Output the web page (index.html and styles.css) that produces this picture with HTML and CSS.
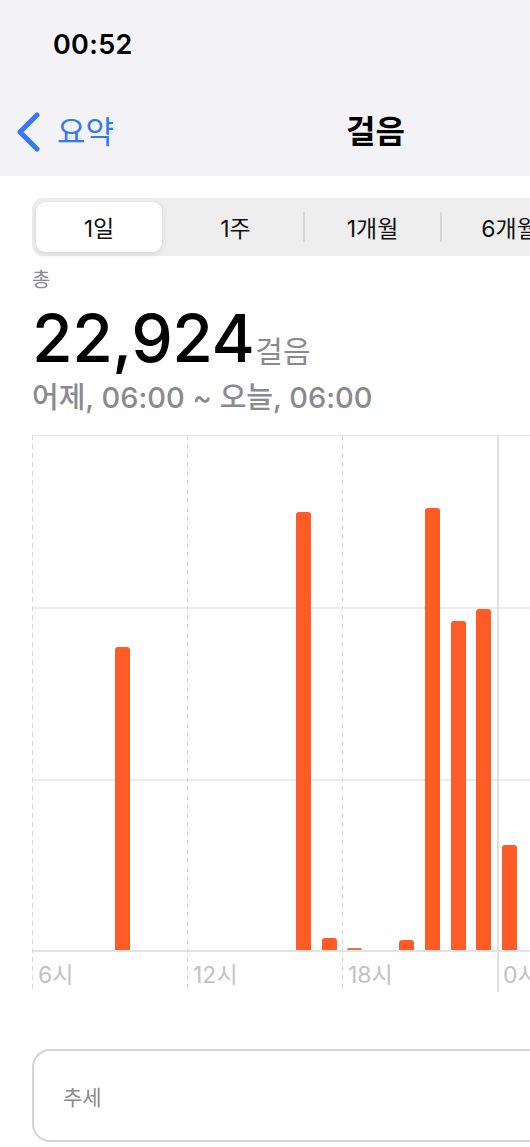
FILE: index.html
```html
<!DOCTYPE html>
<html lang="ko">
<head>
<meta charset="utf-8">
<link rel="stylesheet" href="styles.css">
</head>
<body>
<div class="page">
  <header class="top">
    <div class="status"><span class="time">00:52</span></div>
    <nav class="navbar">
      <a class="back">
        <svg class="chev" width="26" height="40" viewBox="0 0 26 40"><path d="M21 3 L4 20 L21 37" fill="none" stroke="#3478f6" stroke-width="5" stroke-linecap="round" stroke-linejoin="round"/></svg>
        <span class="back-label">요약</span>
      </a>
      <h1 class="title">걸음</h1>
    </nav>
  </header>

  <main class="content">
    <div class="segmented">
      <div class="seg selected">1일</div>
      <div class="seg">1주</div>
      <div class="sep"></div>
      <div class="seg">1개월</div>
      <div class="sep"></div>
      <div class="seg">6개월</div>
      <div class="sep"></div>
      <div class="seg">1년</div>
    </div>

    <div class="label-total">총</div>
    <div class="total"><span class="num">22,924</span><span class="unit">걸음</span></div>
    <div class="range">어제, 06:00 ~ 오늘, 06:00</div>

    <div class="chart">
      <div class="plot">
        <div class="slot"></div><div class="slot"></div><div class="slot"></div>
        <div class="slot"><div class="bar" style="height:303px"></div></div>
        <div class="slot"></div><div class="slot"></div><div class="slot"></div><div class="slot"></div><div class="slot"></div><div class="slot"></div>
        <div class="slot"><div class="bar" style="height:438px"></div></div>
        <div class="slot"><div class="bar" style="height:12px"></div></div>
        <div class="slot"><div class="bar tiny" style="height:2px"></div></div>
        <div class="slot"></div>
        <div class="slot"><div class="bar" style="height:10px"></div></div>
        <div class="slot"><div class="bar" style="height:442px"></div></div>
        <div class="slot"><div class="bar" style="height:329px"></div></div>
        <div class="slot"><div class="bar" style="height:341px"></div></div>
        <div class="slot"><div class="bar" style="height:105px"></div></div>
        <div class="slot"></div><div class="slot"></div><div class="slot"></div><div class="slot"></div><div class="slot"></div>
      </div>
      <div class="axis">
        <div class="tick">6시</div>
        <div class="tick">12시</div>
        <div class="tick">18시</div>
        <div class="tick midnight">0시</div>
      </div>
      <div class="vline v0"></div>
      <div class="vline v1"></div>
      <div class="vline v2"></div>
      <div class="vline v3 solid"></div>
    </div>

    <div class="card"><span class="card-label">추세</span></div>
  </main>
</div>
</body>
</html>
```

FILE: styles.css
```css
html, body {
  margin: 0;
  padding: 0;
  overflow: hidden;
  background: #ffffff;
}
body {
  font-family: Inter, "Noto Sans CJK KR", sans-serif;
  color: #000;
}
.page {
  width: 750px;
}
.top {
  background: #f2f2f7;
  height: 176px;
}
.status {
  height: 88px;
  display: flex;
  align-items: center;
  padding-left: 53px;
}
.time {
  font-size: 27px;
  font-weight: 600;
  letter-spacing: 0.3px;
}
.navbar {
  height: 88px;
  display: flex;
  align-items: center;
  position: relative;
}
.back {
  display: flex;
  align-items: center;
  padding-left: 16px;
  gap: 15px;
}
.chev {
  display: block;
}
.back-label {
  color: #3478f6;
  font-size: 31px;
  line-height: 40px;
}
.title {
  margin: 0;
  margin-left: 232px;
  font-size: 32px;
  font-weight: 600;
  line-height: 40px;
}
.content {
  padding-left: 32px;
}
.segmented {
  margin-top: 22px;
  width: 686px;
  height: 58px;
  box-sizing: border-box;
  padding: 4px;
  background: #eeeeef;
  border-radius: 11px;
  display: flex;
  align-items: center;
}
.seg {
  flex: 1 1 0;
  height: 50px;
  display: flex;
  align-items: center;
  justify-content: center;
  font-size: 23px;
  color: #111;
}
.seg.selected {
  background: #fff;
  border-radius: 9px;
  box-shadow: 0 2px 6px rgba(0,0,0,0.10), 0 0 1px rgba(0,0,0,0.08);
  flex: 0 0 126px;
  margin-right: 6px;
}
.sep {
  width: 2px;
  height: 30px;
  background: #d6d6d8;
  border-radius: 1px;
}
.label-total {
  margin-top: 12px;
  font-size: 20px;
  line-height: 24px;
  color: #8a8a8e;
}
.total {
  margin-top: 10px;
  height: 72px;
  display: flex;
  align-items: baseline;
}
.num {
  font-size: 66px;
  line-height: 72px;
  font-weight: 500;
  letter-spacing: -0.5px;
}
.unit {
  font-size: 30px;
  color: #8a8a8e;
  margin-left: 1px;
}
.range {
  margin-top: 8px;
  font-size: 29px;
  line-height: 32px;
  color: #8a8a8e;
  font-weight: 500;
}
.chart {
  margin-top: 21px;
  width: 686px;
  position: relative;
}
.plot {
  width: 620px;
  height: 517px;
  box-sizing: border-box;
  border-top: 1px solid #e8e8e8;
  border-bottom: 2px solid #e3e3e3;
  display: flex;
  align-items: flex-end;
  background:
    linear-gradient(#ececec, #ececec) 0 171px / 100% 2px no-repeat,
    linear-gradient(#ececec, #ececec) 0 343px / 100% 2px no-repeat;
}
.slot {
  flex: 0 0 25.833px;
  display: flex;
  justify-content: center;
  align-items: flex-end;
}
.bar {
  width: 15px;
  background: #fe5b26;
  border-radius: 3px 3px 0 0;
}
.bar.tiny {
  background: #d07a55;
}
.axis {
  display: flex;
  height: 40px;
  box-sizing: border-box;
  padding-top: 8px;
}
.tick {
  flex: 0 0 155px;
  box-sizing: border-box;
  padding-left: 6px;
  font-size: 23px;
  line-height: 30px;
  color: #c2c2c4;
}
.vline {
  position: absolute;
  top: 0;
  bottom: 0;
  width: 1px;
  background: repeating-linear-gradient(to bottom, #d9d9d9 0 5px, transparent 5px 9px);
}
.vline.solid {
  width: 2px;
  background: #e0e0e0;
}
.v0 { left: 0; }
.v1 { left: 155px; }
.v2 { left: 310px; }
.v3 { left: 465px; }
.card {
  margin-top: 57px;
  width: 686px;
  height: 93px;
  box-sizing: border-box;
  border: 2px solid #d4d4d6;
  border-radius: 18px;
  display: flex;
  align-items: center;
  padding-left: 29px;
}
.card-label {
  font-size: 21px;
  color: #8a8a8e;
}
```
